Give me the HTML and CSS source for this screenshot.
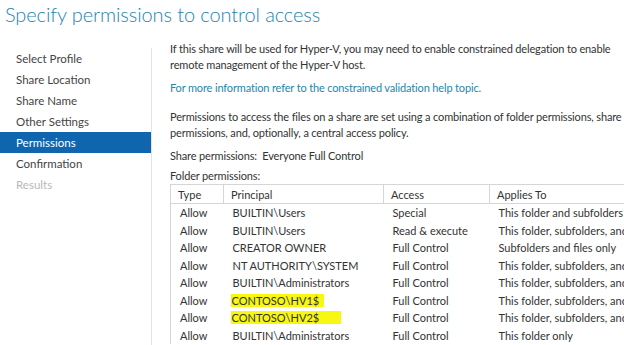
FILE: index.html
```html
<!DOCTYPE html>
<html lang="en">
<head>
    <meta charset="UTF-8">
    <title>Specify permissions to control access</title>
    <link rel="stylesheet" href="styles.css">
</head>
<body>
    <h1 class="title">Specify permissions to control access</h1>

    <div class="wizard">
        <ul class="steps">
            <li>Select Profile</li>
            <li>Share Location</li>
            <li>Share Name</li>
            <li>Other Settings</li>
            <li class="active">Permissions</li>
            <li>Confirmation</li>
            <li class="disabled">Results</li>
        </ul>

        <div class="content">
            <p class="note">If this share will be used for Hyper-V, you may need to enable constrained delegation to enable<br>remote management of the Hyper-V host.</p>
            <p class="link">For more information refer to the constrained validation help topic.</p>
            <p class="note intro">Permissions to access the files on a share are set using a combination of folder permissions, share<br>permissions, and, optionally, a central access policy.</p>
            <p class="label share">Share permissions:&nbsp; Everyone Full Control</p>
            <p class="label folder">Folder permissions:</p>

            <div class="grid">
                <table>
                    <thead>
                        <tr>
                            <th class="c-type">Type</th>
                            <th class="c-principal">Principal</th>
                            <th class="c-access">Access</th>
                            <th class="c-applies">Applies To</th>
                        </tr>
                    </thead>
                    <tbody>
                        <tr><td>Allow</td><td>BUILTIN\Users</td><td>Special</td><td>This folder and subfolders</td></tr>
                        <tr><td>Allow</td><td>BUILTIN\Users</td><td>Read &amp; execute</td><td>This folder, subfolders, and files</td></tr>
                        <tr><td>Allow</td><td>CREATOR OWNER</td><td>Full Control</td><td>Subfolders and files only</td></tr>
                        <tr><td>Allow</td><td>NT AUTHORITY\SYSTEM</td><td>Full Control</td><td>This folder, subfolders, and files</td></tr>
                        <tr><td>Allow</td><td>BUILTIN\Administrators</td><td>Full Control</td><td>This folder, subfolders, and files</td></tr>
                        <tr><td>Allow</td><td><span class="mark mark1">CONTOSO\HV1$</span></td><td>Full Control</td><td>This folder, subfolders, and files</td></tr>
                        <tr><td>Allow</td><td><span class="mark mark2">CONTOSO\HV2$</span></td><td>Full Control</td><td>This folder, subfolders, and files</td></tr>
                        <tr><td>Allow</td><td>BUILTIN\Administrators</td><td>Full Control</td><td>This folder only</td></tr>
                    </tbody>
                </table>
            </div>
        </div>
    </div>
</body>
</html>
```

FILE: styles.css
```css
/* Global */
body {
    margin: 0;
    background-color: #ffffff;
    font-family: Lato, "Open Sans", sans-serif;
    font-size: 11px;
    color: #333333;
    overflow: hidden;
}

/* Title */
.title {
    margin: 0;
    padding: 2px 0 0 5px;
    height: 39px;
    font-size: 20px;
    font-weight: 300;
    letter-spacing: -0.1px;
    color: #2485ae;
    white-space: nowrap;
}

.wizard {
    display: flex;
    align-items: flex-start;
}

/* Step list */
.steps {
    list-style: none;
    margin: 7px 0 0 0;
    padding: 0;
    width: 151px;
    flex-shrink: 0;
    border-right: 1px solid #e3e3e3;
    min-height: 320px;
    font-size: 11.5px;
}

.steps li {
    height: 21px;
    line-height: 21px;
    padding-left: 16px;
    color: #444444;
}

.steps li.active {
    background-color: #0f66ae;
    color: #ffffff;
}

.steps li.disabled {
    color: #b8b8b8;
}

/* Content */
.content {
    padding: 0 0 0 18px;
    flex: 1;
    min-width: 0;
    overflow: hidden;
}

.content p {
    margin: 0;
    white-space: nowrap;
    letter-spacing: -0.15px;
}

.note {
    line-height: 16px;
}

.link {
    margin-top: 7px !important;
    color: #1d87ad;
    line-height: 16px;
}

.intro {
    margin-top: 13px !important;
}

.label {
    line-height: 16px;
}

.share {
    margin-top: 7px !important;
}

.folder {
    margin-top: 4px !important;
}

/* Permission grid */
.grid {
    margin-top: 0;
    border-left: 1px solid #d6d6d6;
    border-top: 1px solid #d6d6d6;
    overflow: hidden;
    white-space: nowrap;
}

table {
    border-collapse: collapse;
    table-layout: fixed;
    width: 520px;
}

th {
    text-align: left;
    font-weight: normal;
    height: 18px;
    padding: 0 0 0 7px;
    border-right: 1px solid #d6d6d6;
    border-bottom: 1px solid #d6d6d6;
    color: #333333;
}

td {
    height: 17.5px;
    padding: 0 0 0 9px;
    line-height: 17px;
}

.c-type { width: 45px; }
.c-principal { width: 152px; }
.c-access { width: 98px; }
.c-applies { width: 200px; }

/* Highlighter marks */
.mark {
    background-color: #f7f711;
    padding: 0 2px 0 1px;
    margin-left: -2px;
}

.mark1 {
    padding-right: 5px;
}

.mark2 {
    padding-right: 22px;
}
```
